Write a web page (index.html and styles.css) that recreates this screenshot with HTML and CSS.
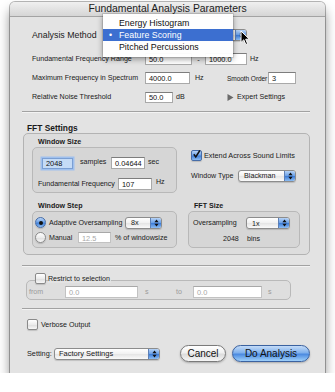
FILE: index.html
```html
<!DOCTYPE html>
<html>
<head>
<meta charset="utf-8">
<link rel="stylesheet" href="styles.css">
</head>
<body>
<div class="window">
  <div class="titlebar">Fundamental Analysis Parameters</div>

  <div class="row method-row">
    <span class="lbl lg w-method">Analysis Method</span>
    <div class="popup p-method"><span class="pv lgtxt"></span><span class="cap"><svg width="5" height="8" viewBox="0 0 5 8"><path d="M2.5 0.5 L4.6 3.2 L0.4 3.2 Z M2.5 7.5 L4.6 4.8 L0.4 4.8 Z" fill="#111"/></svg></span></div>
  </div>

  <div class="row param-row">
    <span class="lbl sm w-plabel">Fundamental Frequency Range</span>
    <span class="field w-r1">50.0</span>
    <span class="dash">-</span>
    <span class="field w-r2">1000.0</span>
    <span class="lbl sm ml3">Hz</span>
  </div>

  <div class="row param-row mt7">
    <span class="lbl sm w-plabel">Maximum Frequency in Spectrum</span>
    <span class="field w-max">4000.0</span>
    <span class="lbl sm w-hz">Hz</span>
    <span class="lbl w-smooth">Smooth Order</span>
    <span class="field w-so">3</span>
  </div>

  <div class="row param-row mt7">
    <span class="lbl sm w-plabel">Relative Noise Threshold</span>
    <span class="field w-noise">50.0</span>
    <span class="lbl sm w-db">dB</span>
    <span class="disclosure"><svg width="7" height="7" viewBox="0 0 7 7"><path d="M0.5 0 L6.5 3.5 L0.5 7 Z" fill="#6a6a6a"/></svg></span>
    <span class="lbl sm">Expert Settings</span>
  </div>

  <div class="sep sep1"></div>

  <div class="sec-title">FFT Settings</div>
  <div class="group">
    <div class="sub-title c1 r1">Window Size</div>
    <div class="sub ws c1 r2">
      <div class="row ws-row1">
        <span class="field focus w-2048">2048</span>
        <span class="lbl sm w-samples">samples</span>
        <span class="field w-sec">0.04644</span>
        <span class="lbl sm ml3 up1">sec</span>
      </div>
      <div class="row ws-row2">
        <span class="lbl sm w-ff">Fundamental Frequency</span>
        <span class="field w-sec">107</span>
        <span class="lbl sm ml4 up2">Hz</span>
      </div>
    </div>

    <div class="right-top c2">
      <div class="row ext-row">
        <span class="check checked"><svg width="11" height="11" viewBox="0 0 11 11"><path d="M2.2 5.2 L4.6 8.4 L9.6 0.6" fill="none" stroke="#111" stroke-width="1.8"/></svg></span>
        <span class="lbl sm ml2 ext">Extend Across Sound Limits</span>
      </div>
      <div class="row wt-row">
        <span class="lbl sm w-wt">Window Type</span>
        <div class="popup p-wt"><span class="pv">Blackman</span><span class="cap"><svg width="5" height="8" viewBox="0 0 5 8"><path d="M2.5 0.5 L4.6 3.2 L0.4 3.2 Z M2.5 7.5 L4.6 4.8 L0.4 4.8 Z" fill="#111"/></svg></span></div>
      </div>
    </div>

    <div class="sub-title c1 r3">Window Step</div>
    <div class="sub wstep c1 r4">
      <div class="row st-row1">
        <span class="radio on"><i></i></span>
        <span class="lbl sm w-adapt">Adaptive Oversampling</span>
        <div class="popup p-8x"><span class="pv">8x</span><span class="cap"><svg width="5" height="8" viewBox="0 0 5 8"><path d="M2.5 0.5 L4.6 3.2 L0.4 3.2 Z M2.5 7.5 L4.6 4.8 L0.4 4.8 Z" fill="#111"/></svg></span></div>
      </div>
      <div class="row st-row2">
        <span class="radio"></span>
        <span class="lbl sm w-manual">Manual</span>
        <span class="field disabled w-manfield">12.5</span>
        <span class="lbl sm ml4">% of windowsize</span>
      </div>
    </div>

    <div class="sub-title c2 r3 fft-title">FFT Size</div>
    <div class="sub fsize c2 r4">
      <div class="row fs-row1">
        <span class="lbl sm w-over">Oversampling</span>
        <div class="popup p-1x"><span class="pv">1x</span><span class="cap"><svg width="5" height="8" viewBox="0 0 5 8"><path d="M2.5 0.5 L4.6 3.2 L0.4 3.2 Z M2.5 7.5 L4.6 4.8 L0.4 4.8 Z" fill="#111"/></svg></span></div>
      </div>
      <div class="row fs-row2">
        <span class="lbl sm w-bins">2048</span>
        <span class="lbl sm">bins</span>
      </div>
    </div>
  </div>

  <div class="sep sep2"></div>

  <div class="restrict">
    <div class="row legend">
      <span class="check"></span>
      <span class="lbl sm ml2 legend-text">Restrict to selection</span>
    </div>
    <div class="row from-row">
      <span class="lbl sm dis w-from">from</span>
      <span class="field disabled w-from-f">0.0</span>
      <span class="lbl sm dis w-s1">s</span>
      <span class="lbl sm dis w-to">to</span>
      <span class="field disabled w-to-f">0.0</span>
      <span class="lbl sm dis ml6">s</span>
    </div>
  </div>

  <div class="sep sep3"></div>

  <div class="row verbose-row">
    <span class="check"></span>
    <span class="lbl sm ml3">Verbose Output</span>
  </div>

  <div class="row bottom-row">
    <span class="lbl setting w-setting">Setting:</span>
    <div class="popup p-fs"><span class="pv fs-txt">Factory Settings</span><span class="cap"><svg width="5" height="8" viewBox="0 0 5 8"><path d="M2.5 0.5 L4.6 3.2 L0.4 3.2 Z M2.5 7.5 L4.6 4.8 L0.4 4.8 Z" fill="#111"/></svg></span></div>
    <span class="btn cancel">Cancel</span>
    <span class="btn default">Do Analysis</span>
  </div>

  <div class="menu">
    <div class="mi">Energy Histogram</div>
    <div class="mi sel">Feature Scoring</div>
    <div class="mi">Pitched Percussions</div>
  </div>

  <svg class="cursor" width="11" height="16" viewBox="0 0 11 16"><path d="M1 1 L1 12.5 L3.8 9.8 L5.8 14.5 L7.6 13.7 L5.7 9.2 L9.4 9.2 Z" fill="#000" stroke="#fff" stroke-width="1"/></svg>
</div>
</body>
</html>
```
FILE: styles.css
```css
* { box-sizing: border-box; }
html, body { margin: 0; padding: 0; background: #fff; }
body { font-family: "Liberation Sans", Arial, sans-serif; color: #1a1a1a; }

.window {
  position: relative;
  margin: 2px 0 0 10px;
  width: 315px;
  height: 371px;
  background: #e3e3e3;
  border-radius: 5px 5px 0 0;
  box-shadow: 0 0 0 1px rgba(0,0,0,0.28), 0 8px 12px rgba(0,0,0,0.45);
}
.titlebar {
  height: 15px;
  line-height: 14px;
  text-align: center;
  font-size: 10.4px;
  color: #1c1c1c;
  background: linear-gradient(#f0f0f0, #d5d5d5);
  border-bottom: 1px solid #a3a3a3;
  border-radius: 5px 5px 0 0;
}

.row { display: flex; align-items: center; }
.lbl { white-space: nowrap; }
.lg { font-size: 8.8px; }
.sm { font-size: 7.1px; }
.dis { color: #9a9a9a; }
.ml2 { margin-left: 2px; }
.ml3 { margin-left: 3px; }
.ml4 { margin-left: 4px; }
.ml6 { margin-left: 6px; }
.mt7 { margin-top: 7px !important; }
.up1 { margin-top: -2px; }
.up2 { margin-top: -4px; }

.field {
  display: flex;
  align-items: center;
  height: 12px;
  padding: 1px 3px 0;
  background: #fff;
  border: 1px solid #a9a9a9;
  border-top-color: #7d7d7d;
  font-size: 7.4px;
  color: #111;
}
.field.disabled { color: #a8a8a8; border-color: #c2c2c2; border-top-color: #a8a8a8; }
.field.focus {
  background: #c5dbf6;
  border-color: #7b9fd3;
  box-shadow: 0 0 0 1.5px #9fc0ee;
  height: 11px;
}

/* top params */
.method-row { margin-top: 11px; height: 14px; padding-left: 22px; }
.w-method { width: 74px; }
.p-method { width: 141px; height: 14px; }
.param-row { margin-top: 11px; height: 12px; padding-left: 22px; }
.w-plabel { width: 113px; }
.w-r1 { width: 47px; }
.dash { width: 13px; text-align: center; font-size: 7.4px; }
.w-r2 { width: 42px; }
.w-max { width: 45px; }
.w-hz { width: 37px; padding-left: 5px; }
.w-smooth { width: 41px; font-size: 6.6px; letter-spacing: -0.1px; }
.w-so { width: 28px; }
.w-noise { width: 28px; height: 11px; }
.w-db { width: 54px; padding-left: 3px; }
.disclosure { display: flex; width: 10px; }

.sep {
  margin-left: 12px;
  width: 288px;
  height: 2px;
  border-top: 1px solid #a2a2a2;
  border-bottom: 1px solid #f3f3f3;
}
.sep1 { margin-top: 8px; }
.sep2 { margin-top: 10px; }
.sep3 { margin-top: 8px; }

.sec-title {
  margin-top: 10px;
  height: 10px;
  line-height: 10px;
  padding-left: 17px;
  font-size: 8.4px;
  font-weight: bold;
}

.group {
  margin-left: 13px;
  width: 287px;
  height: 122px;
  border: 1px solid #b3b3b3;
  border-radius: 5px;
  background: rgba(0,0,0,0.025);
  display: grid;
  grid-template-columns: 145px 112px;
  grid-template-rows: 10px 46px 18px 37px;
  column-gap: 11px;
  padding: 3px 0 0 8px;
}
.c1 { grid-column: 1; }
.c2 { grid-column: 2; }
.r1 { grid-row: 1; }
.r2 { grid-row: 2; }
.r3 { grid-row: 3; }
.r4 { grid-row: 4; }
.sub-title {
  font-size: 7.1px;
  font-weight: bold;
  line-height: 10px;
  height: 10px;
  padding-left: 6px;
  align-self: end;
}
.fft-title { padding-left: 6px; }
.sub {
  border: 1px solid #b8b8b8;
  border-radius: 5px;
  background: rgba(0,0,0,0.03);
}

.ws-row1 { margin-top: 9px; height: 12px; padding-left: 9px; }
.w-2048 { width: 31px; }
.w-samples { width: 38px; padding-left: 7px; margin-top: -2px; }
.w-sec { width: 34px; }
.ws-row2 { margin-top: 9px; height: 11px; padding-left: 5px; }
.w-ff { width: 80px; }

.right-top { grid-row: 1 / 3; }
.ext-row { margin-top: 13px; height: 11px; padding-left: 3px; }
.ext { font-size: 7.3px; }
.wt-row { margin-top: 8px; height: 13px; padding-left: 3px; }
.w-wt { width: 47px; }
.p-wt { width: 58px; height: 13px; }

.st-row1 { margin-top: 5px; height: 11px; padding-left: 2px; }
.w-adapt { width: 79px; padding-left: 3px; }
.p-8x { width: 37px; height: 11px; }
.st-row2 { margin-top: 4px; height: 11px; padding-left: 2px; }
.w-manual { width: 32px; padding-left: 3px; }
.w-manfield { width: 33px; height: 11px; }

.fs-row1 { margin-top: 5px; height: 12px; padding-left: 4px; }
.w-over { width: 53px; }
.p-1x { width: 44px; height: 12px; }
.fs-row2 { margin-top: 4px; height: 11px; padding-left: 34px; }
.w-bins { width: 24px; }

/* widgets */
.popup {
  display: flex;
  align-items: stretch;
  height: 12px;
  border: 1px solid #8c8c8c;
  border-radius: 3px;
  background: linear-gradient(#ffffff, #f2f2f2 45%, #e6e6e6 55%, #fafafa);
  box-shadow: 0 1px 1px rgba(0,0,0,0.15);
  overflow: hidden;
  font-size: 7.2px;
}
.pv { flex: 1; display: flex; align-items: center; padding-left: 5px; white-space: nowrap; }
.lgtxt { font-size: 8.8px; }
.cap {
  width: 11px;
  display: flex;
  align-items: center;
  justify-content: center;
  border-left: 1px solid #5d80b6;
  background: linear-gradient(#b7d3f6, #6ea3e8 45%, #3f7ed8 55%, #8cbdf3);
}

.check {
  width: 11px;
  height: 11px;
  flex: none;
  border: 1px solid #8a8a8a;
  border-radius: 2px;
  background: linear-gradient(#ffffff, #ececec 50%, #dedede 55%, #f8f8f8);
  box-shadow: 0 1px 1px rgba(0,0,0,0.15);
  display: flex;
}
.check.checked {
  border-color: #476da8;
  background: linear-gradient(#b9d4f6, #70a4e8 45%, #417fd7 55%, #8dbdf2);
}
.check.checked svg { margin: -2px 0 0 0; }

.radio {
  width: 11px;
  height: 11px;
  flex: none;
  border-radius: 50%;
  border: 1px solid #8a8a8a;
  background: linear-gradient(#ffffff, #ececec 50%, #dedede 55%, #f8f8f8);
  box-shadow: 0 1px 1px rgba(0,0,0,0.15);
  display: flex;
  align-items: center;
  justify-content: center;
}
.radio.on {
  border-color: #476da8;
  background: linear-gradient(#b9d4f6, #70a4e8 45%, #417fd7 55%, #8dbdf2);
}
.radio.on i { width: 4px; height: 4px; border-radius: 50%; background: #111; }

/* restrict */
.restrict {
  margin: 13px 0 0 16px;
  width: 265px;
  height: 20px;
  border: 1px solid #b9b9b9;
  border-radius: 5px;
  background: rgba(0,0,0,0.02);
}
.legend { margin-top: -8px; height: 11px; padding-left: 8px; }
.legend-text { background: #e3e3e3; padding-right: 1px; }
.from-row { margin-top: 2px; height: 11px; padding-left: 2px; }
.w-from { width: 36px; }
.w-from-f { width: 73px; }
.w-s1 { width: 38px; padding-left: 7px; }
.w-to { width: 17px; }
.w-to-f { width: 69px; }

.verbose-row { margin-top: 9px; height: 11px; padding-left: 17px; }

.bottom-row { margin-top: 15px; height: 17px; padding-left: 17px; }
.setting { font-size: 7.3px; }
.w-setting { width: 27px; }
.p-fs { width: 106px; height: 12px; }
.fs-txt { font-size: 7.5px; padding-left: 4px; }
.btn {
  display: flex;
  align-items: center;
  justify-content: center;
  height: 17px;
  border-radius: 9px;
  font-size: 10px;
  color: #111;
  border: 1px solid #7a7a7a;
  box-shadow: 0 1px 2px rgba(0,0,0,0.25);
}
.cancel {
  margin-left: 20px;
  width: 46px;
  background: linear-gradient(#ffffff, #f0f0f0 45%, #dcdcdc 55%, #f6f6f6);
}
.default {
  margin-left: 6px;
  width: 78px;
  border-color: #3b62a0;
  background: linear-gradient(#c4dcf8, #7fb0ec 45%, #4b8ae0 55%, #9fd0fa);
}

/* open menu overlay */
.menu {
  position: absolute;
  left: 93px;
  top: 12px;
  width: 130px;
  padding: 3px 0 4px;
  background: rgba(255,255,255,0.97);
  box-shadow: 0 2px 6px rgba(0,0,0,0.4), 0 0 0 1px rgba(0,0,0,0.1);
  font-size: 8.8px;
}
.mi { position: relative; height: 12px; line-height: 12px; padding-left: 16px; color: #111; }
.mi.sel { background: #3c6fd0; color: #fff; }
.mi.sel::before { content: "\2022"; position: absolute; left: 6px; }

.cursor { position: absolute; left: 230px; top: 28px; }
```
